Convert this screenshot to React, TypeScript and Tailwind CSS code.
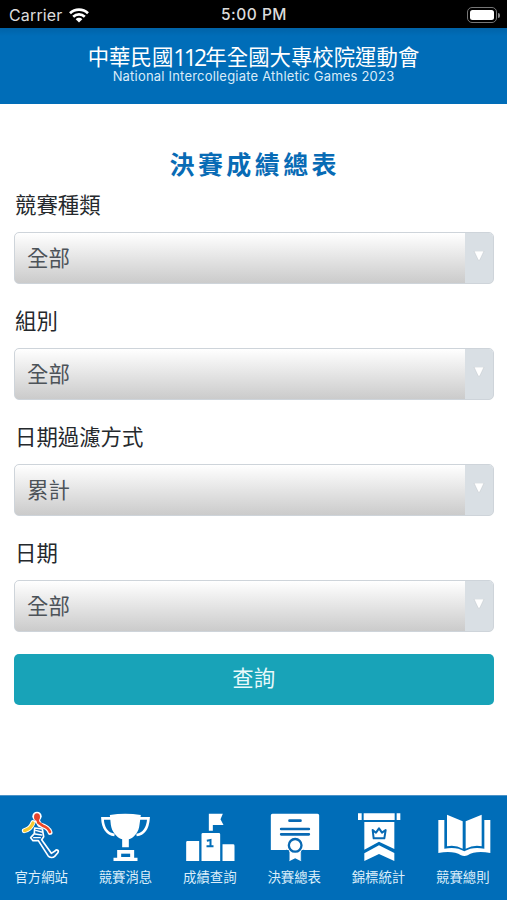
import type { ReactNode } from "react";

const fields = [
  { label: "競賽種類", value: "全部" },
  { label: "組別", value: "全部" },
  { label: "日期過濾方式", value: "累計" },
  { label: "日期", value: "全部" },
];

function StatusBar() {
  return (
    <div className="grid h-7 shrink-0 grid-cols-3 items-center bg-black pt-0.5 text-[16px] text-[#dcdcdc]">
      <div className="flex items-center gap-[6px] pl-[9px]">
        <span className="tracking-[0.15px]">Carrier</span>
        <svg width="20" height="15" viewBox="0 0 20 15" fill="none" stroke="#fff" strokeWidth="2.7">
          <path d="M1 5.2C6 .4 14 .4 19 5.2" />
          <path d="M4.2 8.7c3.3-3.1 8.3-3.1 11.6 0" />
          <path d="M10 14.4 6.7 11.2c1.8-1.8 4.8-1.8 6.6 0Z" fill="#fff" stroke="none" />
        </svg>
      </div>
      <div className="pl-px text-center text-[15.5px] font-medium tracking-[0.5px]">5:00 PM</div>
      <div className="flex items-center justify-end gap-px pr-[7px]">
        <div className="h-[16px] w-[30px] rounded-[5px] border border-[#777] p-[2px]">
          <div className="h-full w-full rounded-[2.5px] bg-white" />
        </div>
        <div className="h-[5px] w-[2px] rounded-r-full bg-[#888]" />
      </div>
    </div>
  );
}

function SelectField({ label, value }: { label: string; value: string }) {
  return (
    <div className="mb-[22px]">
      <div className="mb-[10px] h-8 pl-px text-[21.4px] leading-[31px] text-[#25292d]">{label}</div>
      <div className="flex h-[52px] overflow-hidden rounded-[5px] border border-[#ced4da] bg-linear-to-b from-white to-[#cbcbcb]">
        <div className="flex-1 pl-3 text-[21.4px] leading-[51px] text-[#4d5359]">{value}</div>
        <div className="flex w-7 justify-center bg-[#d9dfe4] pt-[18px]">
          <svg width="12" height="10" viewBox="0 0 12 10">
            <path d="M1 0h10L6.7 9.2H5.3Z" fill="#fff" stroke="#bfc5ca" strokeWidth=".5" />
          </svg>
        </div>
      </div>
    </div>
  );
}

const tabs: { label: string; box: string; icon: ReactNode }[] = [
  {
    label: "官方網站",
    box: "0 0 253 210",
    icon: (
      <g fill="none" strokeLinecap="round" strokeLinejoin="round">
        <path d="M99 83C94 97 86 104 73 107M112 76 119 89C136 94 147 101 150 112" stroke="#fff" strokeWidth="15" />
        <circle cx="111" cy="64" r="14" fill="#fff" />
        <path d="M104 99 103 116 92 128 99 137 115 137 144 182C149 189 159 189 164 184L173 174C178 167 171 161 165 168L154 175 125 134 131 125 127 102Z" fill="#0868b5" stroke="#fff" strokeWidth="5" />
        <path d="m107 106 18 5M105 117l20 3M101 128l20 0" stroke="#fff" strokeWidth="4" />
        <path d="M99 84C95 95 87 103 74 107" stroke="#f7c92f" strokeWidth="10" />
        <path d="m111 68 4 15 13 9c12 4 19 9 22 19" stroke="#ed4827" strokeWidth="8" />
        <ellipse cx="111" cy="66" rx="9" ry="11" fill="#e7432d" />
      </g>
    ),
  },
  {
    label: "競賽消息",
    box: "251.5 0 253 210",
    icon: (
      <g>
        <path d="M329 60Q375 52 422 60L418 89C416 110 404 126 386 133V157H366V133C348 126 335 110 332 89Z" fill="#fff" />
        <path d="M333 70H307C308 97 320 117 343 120M418 70H445C443 97 431 117 409 120" fill="none" stroke="#fff" strokeWidth="8" />
        <path d="M351 165H402V188H412V198H340V188H351Z" fill="#fff" />
        <path d="M363 176H390V186H363Z" fill="#006db8" />
      </g>
    ),
  },
  {
    label: "成績查詢",
    box: "0.5 0 253 210",
    icon: (
      <g>
        <path d="M120 56H162L155 73 164 90H132V107H120ZM102 114H150Q154 114 154 118V198H98V118Q98 114 102 114ZM56 138H91V198H52V142Q52 138 56 138ZM161 148H193Q197 148 197 152V198H161Z" fill="#fff" />
        <path d="M114 137 125 135V153M113 154H134" fill="none" stroke="#006db8" strokeWidth="6" />
      </g>
    ),
  },
  {
    label: "決賽總表",
    box: "252.5 0 253 210",
    icon: (
      <g>
        <path d="M311 56H446Q451 56 451 61V165H306V61Q306 56 311 56ZM361 158H397V199L379 190 361 199Z" fill="#fff" />
        <path d="M362 77H395M337 102H420M337 118H420" stroke="#0869b3" strokeWidth="8" strokeLinecap="round" />
        <circle cx="379" cy="151" r="25" fill="#fff" />
        <circle cx="379" cy="151" r="19" fill="#fff" stroke="#0869b3" strokeWidth="7" />
        <path d="M354 164 361 171V197M404 164 397 171V197" fill="none" stroke="#006db8" strokeWidth="2" />
      </g>
    ),
  },
  {
    label: "錦標統計",
    box: "-1 0 253 210",
    icon: (
      <g fill="#fff">
        <path d="M62 55H73V75H62ZM79 55H172V75H79ZM178 55H189V75H178ZM81 81H171V162L125 140 81 164ZM81 175 125 151 171 174V198L125 177 81 198Z" />
        <path d="M106 105 116 113 125 100 134 113 145 105 141 130H109Z" fill="none" stroke="#0869b3" strokeWidth="6" strokeLinejoin="round" />
      </g>
    ),
  },
  {
    label: "競賽總則",
    box: "252 0 253 210",
    icon: (
      <g fill="#fff">
        <path d="M327 59 374 79V161Q352 149 327 154ZM431 59 383 79V161Q407 149 431 154Z" />
        <path d="M301 75H319V161Q355 154 379 169 403 154 439 161V75H457V174Q412 166 389 181 379 185 369 181 346 166 301 174Z" />
      </g>
    ),
  },
];

export default function App() {
  return (
    <div className="flex h-[900px] w-[507px] flex-col overflow-hidden bg-white font-[Inter,'Noto_Sans_CJK_TC',sans-serif]">
      <StatusBar />
      <header className="flex h-[75.5px] shrink-0 flex-col items-center bg-[#006db8] bg-linear-to-b from-[#0063a8] to-[#006db8] to-[8px] pt-[16px] text-white">
        <h1 className="flex h-[26px] items-center whitespace-nowrap text-[21.4px] leading-[22px]">
          中華民國<span className="mr-px font-['Open_Sans',sans-serif] text-[23px] tracking-[-2.8px]">112</span>年全國大專校院運動會
        </h1>
        <p className="whitespace-nowrap text-[13px] leading-[12px] tracking-[0.2px] text-[#d9ebf8]">
          National Intercollegiate Athletic Games 2023
        </p>
      </header>
      <main className="flex-1 pl-[14px] pr-[13.5px] pt-[44.5px]">
        <h2 className="mb-[8px] h-[34px] pl-[2px] text-center text-[25px] font-bold leading-[34px] tracking-[3.4px] text-[#086bb5]">
          決賽成績總表
        </h2>
        {fields.map((f) => (
          <SelectField key={f.label} {...f} />
        ))}
        <button className="block h-[51px] w-full rounded-[5px] bg-[#18a3b8] pb-0.5 text-[21.4px] text-[#e9f9fb]">查詢</button>
      </main>
      <footer className="grid h-[105px] shrink-0 grid-cols-6 border-t border-[#4c93c8] bg-[#006db8] pr-[1px]">
        {tabs.map((t) => (
          <div key={t.label} className="flex flex-col items-center">
            <svg className="-mt-px h-[70px] w-full" viewBox={t.box}>
              {t.icon}
            </svg>
            <span className="mt-px whitespace-nowrap pr-[2px] text-[13.4px] leading-[22px] text-[#dceefa]">{t.label}</span>
          </div>
        ))}
      </footer>
    </div>
  );
}
